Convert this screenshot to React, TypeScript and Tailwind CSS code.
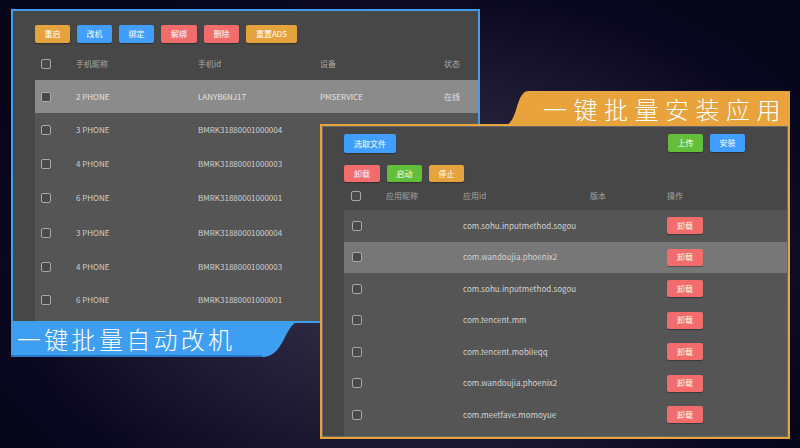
import type { ReactNode } from "react";

const FONT = "font-['Noto_Sans_CJK_SC','Noto_Sans',sans-serif]";

type Tone = "orange" | "blue" | "red" | "green";

const TONES: Record<Tone, string> = {
  orange: "bg-[#e6a23c]",
  blue: "bg-[#409eff]",
  red: "bg-[#f26c6c]",
  green: "bg-[#63bf3a]",
};

function Btn({
  tone,
  className = "w-[35px]",
  children,
}: {
  tone: Tone;
  className?: string;
  children: ReactNode;
}) {
  return (
    <div
      className={`${TONES[tone]} ${className} flex items-center justify-center rounded-[2px] text-[8px] leading-none text-white shadow-[0_1px_1px_rgba(0,0,0,0.35)]`}
    >
      {children}
    </div>
  );
}

function Check() {
  return (
    <span className="block h-[10px] w-[10px] rounded-[2px] border border-[#a8a8a8] bg-[#4a4a4a]" />
  );
}

const phones = [
  { name: "2 PHONE", id: "LANYB6NJ17", dev: "PMSERVICE", state: "在线", h: "h-[33px]", on: true },
  { name: "3 PHONE", id: "BMRK31880001000004", dev: "", state: "", h: "h-[34px]", on: false },
  { name: "4 PHONE", id: "BMRK31880001000003", dev: "", state: "", h: "h-[33px]", on: false },
  { name: "6 PHONE", id: "BMRK31880001000001", dev: "", state: "", h: "h-[35px]", on: false },
  { name: "3 PHONE", id: "BMRK31880001000004", dev: "", state: "", h: "h-[35px]", on: false },
  { name: "4 PHONE", id: "BMRK31880001000003", dev: "", state: "", h: "h-[33px]", on: false },
  { name: "6 PHONE", id: "BMRK31880001000001", dev: "", state: "", h: "h-[34px]", on: false },
];

const apps = [
  "com.sohu.inputmethod.sogou",
  "com.wandoujia.phoenix2",
  "com.sohu.inputmethod.sogou",
  "com.tencent.mm",
  "com.tencent.mobileqq",
  "com.wandoujia.phoenix2",
  "com.meetfave.momoyue",
];

const phoneCols = "grid grid-cols-[41px_122px_122px_124px_1fr] items-center";
const appCols = "grid grid-cols-[42px_77px_127px_77px_1fr] items-center";

function PhonePanel() {
  return (
    <div className="absolute left-[11px] top-[9px] flex h-[314px] w-[469px] flex-col border-2 border-[#3e9ef2] bg-[#474747]">
      <div className="ml-[22px] mt-[14px] flex h-[18px] gap-[7px]">
        <Btn tone="orange">重启</Btn>
        <Btn tone="blue">改机</Btn>
        <Btn tone="blue">绑定</Btn>
        <Btn tone="red" className="w-[36px]">解绑</Btn>
        <Btn tone="red">删除</Btn>
        <Btn tone="orange" className="w-[51px]">重置ADS</Btn>
      </div>
      <div className={`${phoneCols} ml-[22px] mt-[4px] h-[33px] text-[8px] text-[#a9a9a9]`}>
        <span className="pl-[6px]">
          <Check />
        </span>
        <span>手机昵称</span>
        <span>手机id</span>
        <span>设备</span>
        <span>状态</span>
      </div>
      <div className="ml-[22px] flex-1 overflow-hidden bg-[#555555]">
        {phones.map((p, i) => (
          <div
            key={i}
            className={`${phoneCols} ${p.h} text-[8px] ${
              p.on ? "bg-[#8b8b8b] text-[#e2e2e2]" : "text-[#cfcfcf]"
            }`}
          >
            <span className="pl-[6px]">
              <Check />
            </span>
            <span>{p.name}</span>
            <span>{p.id}</span>
            <span>{p.dev}</span>
            <span>{p.state}</span>
          </div>
        ))}
      </div>
    </div>
  );
}

function AppPanel() {
  return (
    <div className="absolute left-[320px] top-[124px] flex h-[315px] w-[470px] flex-col border-2 border-[#e8a33c] bg-[#474747] shadow-[inset_0_0_0_1px_#6a6a6a]">
      <div className="ml-[22px] mr-[43px] mt-[8px] flex h-[19px] items-start">
        <Btn tone="blue" className="h-[19px] w-[52px]">选取文件</Btn>
        <div className="ml-auto flex h-[18px] gap-[7px]">
          <Btn tone="green">上传</Btn>
          <Btn tone="blue">安装</Btn>
        </div>
      </div>
      <div className="ml-[22px] mt-[12px] flex h-[17px] gap-[7px]">
        <Btn tone="red" className="w-[36px]">卸载</Btn>
        <Btn tone="green">启动</Btn>
        <Btn tone="orange">停止</Btn>
      </div>
      <div className={`${appCols} ml-[22px] h-[28px] text-[8px] text-[#a5a5a5]`}>
        <span className="pl-[7px]">
          <Check />
        </span>
        <span>应用昵称</span>
        <span>应用id</span>
        <span>版本</span>
        <span>操作</span>
      </div>
      <div className="ml-[22px] mr-px mb-px flex-1 overflow-hidden bg-[#555555]">
        {apps.map((a, i) => (
          <div
            key={i}
            className={`${appCols} h-[31.5px] text-[8px] text-[#d2d2d2] ${
              i === 1 ? "bg-[#777777]" : ""
            }`}
          >
            <span className="pl-[8px]">
              <Check />
            </span>
            <span />
            <span>{a}</span>
            <span />
            <span>
              <Btn tone="red" className="h-[17px] w-[36px]">卸载</Btn>
            </span>
          </div>
        ))}
      </div>
    </div>
  );
}

function BlueTag() {
  return (
    <div className="absolute left-[11px] top-[321px] flex h-[36px]">
      <div className="flex w-[251px] items-center bg-[#3e9ef2] pl-[6px] text-[24px] font-light leading-none tracking-[3.3px] text-white shadow-[inset_0_-2px_0_#2a78c4]">
        一键批量自动改机
      </div>
      <svg width="40" height="36" viewBox="0 0 40 36" className="block">
        <path d="M0 0 H40 C31 0 28 7 23 16 C18 26 13 35 2 36 H0 Z" fill="#3e9ef2" />
      </svg>
    </div>
  );
}

function OrangeTag() {
  return (
    <div className="absolute right-[10px] top-[91px] flex h-[35px]">
      <svg width="26" height="35" viewBox="0 0 26 35" className="block">
        <path d="M26 0 V35 H0 C8 35 11 28 14 19 C17 9 20 0 26 0 Z" fill="#e8a33c" />
      </svg>
      <div className="flex w-[262px] items-center bg-[#e8a33c] pl-[15px] text-[24px] font-light leading-none tracking-[6.5px] text-white">
        一键批量安装应用
      </div>
    </div>
  );
}

export default function App() {
  return (
    <div
      className={`${FONT} relative h-[448px] w-[800px] overflow-hidden bg-[radial-gradient(ellipse_60%_70%_at_52%_58%,#3b3650_0%,#25203a_45%,#0a0820_85%,#07051a_100%)]`}
    >
      <PhonePanel />
      <BlueTag />
      <AppPanel />
      <OrangeTag />
    </div>
  );
}
